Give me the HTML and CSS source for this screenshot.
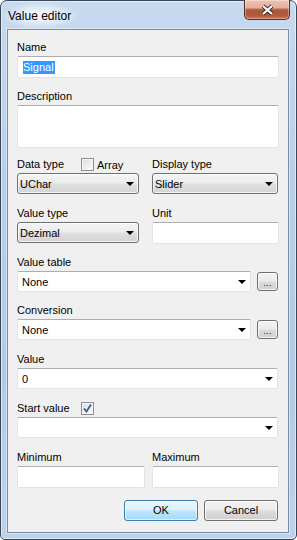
FILE: index.html
```html
<!DOCTYPE html>
<html lang="en">
  <head>
    <meta charset="UTF-8" />
    <meta name="viewport" content="width=device-width, initial-scale=1.0" />
    <title>Value editor</title>
    <link rel="stylesheet" href="styles.css">
  </head>
  <body>
    <div class="window">
      <div class="titlebar">
        <span class="title">Value editor</span>
        <div class="close">
          <svg width="13" height="12" viewBox="0 0 13 12">
            <path d="M2 2 L11 10 M11 2 L2 10" stroke="#3a2620" stroke-width="4" />
            <path d="M2 2 L11 10 M11 2 L2 10" stroke="#ffffff" stroke-width="2.2" />
          </svg>
        </div>
      </div>

      <div class="client">
        <div class="field">
          <div class="label">Name</div>
          <div class="textbox"><span class="selection">Signal</span></div>
        </div>

        <div class="field near">
          <div class="label">Description</div>
          <div class="textbox textarea"></div>
        </div>

        <div class="field grid types">
          <div class="label">
            <span class="label-text">Data type</span>
            <span class="check"></span>
            <span class="check-text">Array</span>
          </div>
          <div class="label">Display type</div>
          <div class="combo flat left">UChar<span class="arrow"></span></div>
          <div class="combo flat">Slider<span class="arrow"></span></div>
        </div>

        <div class="field grid">
          <div class="label">Value type</div>
          <div class="label">Unit</div>
          <div class="combo flat left">Dezimal<span class="arrow"></span></div>
          <div class="textbox"></div>
        </div>

        <div class="field near">
          <div class="label">Value table</div>
          <div class="line">
            <div class="combo">None<span class="arrow"></span></div>
            <div class="small-btn">...</div>
          </div>
        </div>

        <div class="field near">
          <div class="label">Conversion</div>
          <div class="line">
            <div class="combo">None<span class="arrow"></span></div>
            <div class="small-btn">...</div>
          </div>
        </div>

        <div class="field">
          <div class="label">Value</div>
          <div class="combo full">0<span class="arrow"></span></div>
        </div>

        <div class="field">
          <div class="label">
            <span class="label-text">Start value</span>
            <span class="check checked">
              <svg width="11" height="11" viewBox="0 0 11 11">
                <path d="M2 5.5 L4.5 8.5 L9 1.5" fill="none" stroke="#3b5a9b" stroke-width="1.8" />
              </svg>
            </span>
          </div>
          <div class="combo full"><span class="arrow"></span></div>
        </div>

        <div class="field grid">
          <div class="label">Minimum</div>
          <div class="label">Maximum</div>
          <div class="textbox"></div>
          <div class="textbox"></div>
        </div>

        <div class="field actions">
          <div class="button default">OK</div>
          <div class="button">Cancel</div>
        </div>
      </div>
    </div>
  </body>
</html>
```
FILE: styles.css
```css
* {
  box-sizing: border-box;
  margin: 0;
  padding: 0;
}

body {
  width: 297px;
  height: 540px;
  font-family: "Liberation Sans", Arial, sans-serif;
  font-size: 11px;
  color: #000000;
  background: #ffffff;
}

/* window frame */
.window {
  height: 540px;
  display: flex;
  flex-direction: column;
  padding: 0 7px 6px 6px;
  border: 1px solid #3a4656;
  border-radius: 7px 7px 5px 5px;
  background: linear-gradient(to bottom, #c6daf0 0%, #b6cfea 35%, #b0cae7 70%, #bcd3ec 100%);
  box-shadow: inset 0 0 0 1px rgba(255, 255, 255, 0.55);
}

.titlebar {
  height: 28px;
  display: flex;
  align-items: flex-start;
  flex-shrink: 0;
}

.title {
  margin: 1px 0 0 -5px;
  padding: 7px 8px 6px 6px;
  font-size: 12px;
  line-height: 14px;
  background: radial-gradient(ellipse at center, rgba(255, 255, 255, 0.75) 20%, rgba(255, 255, 255, 0) 72%);
}

.close {
  margin: -1px -1px 0 auto;
  width: 46px;
  height: 20px;
  display: flex;
  align-items: center;
  justify-content: center;
  border: 1px solid #4f3028;
  border-top: none;
  border-radius: 0 0 5px 5px;
  background: linear-gradient(to bottom, #efc3b2 0%, #e7ae98 40%, #c9886f 46%, #a85a3e 52%, #b4583a 80%, #cf7258 100%);
  box-shadow: inset 0 0 0 1px rgba(255, 255, 255, 0.35);
}

.close svg {
  margin-top: 1px;
}

/* client area */
.client {
  flex: 1;
  padding: 10px 9px 0;
  background-color: #f0f0f0;
  border: 1px solid #7b8ba0;
  box-shadow: 0 0 0 1px rgba(255, 255, 255, 0.45);
}

.field {
  margin-top: 12px;
}

.field:first-child {
  margin-top: 0;
}

.field.near {
  margin-top: 11px;
}

.field.types {
  margin-top: 9px;
}

.label {
  height: 16px;
  line-height: 14px;
  white-space: nowrap;
  display: flex;
  align-items: flex-start;
}

.label-text {
  width: 64px;
}

.check {
  width: 13px;
  height: 13px;
  margin-top: 1px;
  border: 1px solid #8e8f8f;
  background: linear-gradient(135deg, #dcdcdc 0%, #f0f0f0 60%, #ffffff 100%);
  box-shadow: inset 0 0 0 1px #f4f4f4;
  display: flex;
  align-items: center;
  justify-content: center;
}

.check-text {
  margin-left: 3px;
  margin-top: 1px;
}

.grid {
  display: grid;
  grid-template-columns: 128px 1fr;
  column-gap: 7px;
}

/* text boxes */
.textbox {
  height: 22px;
  display: flex;
  align-items: center;
  padding-left: 5px;
  background: #ffffff;
  border: 1px solid #e2e3ea;
  border-top-color: #abadb3;
  border-radius: 2px;
}

.textarea {
  height: 43px;
}

.selection {
  height: 13px;
  line-height: 13px;
  padding: 0 1px 0 0;
  background: #3399ff;
  color: #ffffff;
}

/* combo boxes */
.combo {
  position: relative;
  height: 21px;
  display: flex;
  align-items: center;
  padding-left: 4px;
  background: #ffffff;
  border: 1px solid #e2e3ea;
  border-top-color: #abadb3;
  border-radius: 2px;
}

.combo.flat {
  padding-left: 2px;
  border: 1px solid #707070;
  border-radius: 3px;
  background: linear-gradient(to bottom, #f4f4f4 0%, #ececec 48%, #dfdfdf 52%, #d4d4d4 100%);
  box-shadow: inset 0 0 0 1px rgba(255, 255, 255, 0.75);
  margin-right: 1px;
}

.combo.left {
  width: 122px;
}

.arrow {
  margin-left: auto;
  margin-right: 4px;
  width: 0;
  height: 0;
  border-left: 4px solid transparent;
  border-right: 4px solid transparent;
  border-top: 4px solid #000000;
}

.line {
  display: flex;
  gap: 6px;
  align-items: center;
}

.line .combo {
  flex: 1;
}

.small-btn {
  width: 21px;
  height: 19px;
  margin-right: 1px;
  text-align: center;
  line-height: 19px;
  font-size: 10px;
  color: #3a2a2a;
  border: 1px solid #707070;
  border-radius: 3px;
  background: linear-gradient(to bottom, #f2f2f2 0%, #ebebeb 48%, #dddddd 52%, #cfcfcf 100%);
  box-shadow: inset 0 0 0 1px rgba(255, 255, 255, 0.75);
}

.combo.full {
  margin-right: 1px;
}

/* dialog buttons */
.actions {
  display: flex;
  justify-content: flex-end;
  gap: 6px;
  padding-right: 1px;
}

.button {
  width: 74px;
  height: 21px;
  line-height: 19px;
  text-align: center;
  border: 1px solid #707070;
  border-radius: 3px;
  background: linear-gradient(to bottom, #f2f2f2 0%, #ebebeb 48%, #dddddd 52%, #cfcfcf 100%);
  box-shadow: inset 0 0 0 1px rgba(255, 255, 255, 0.75);
}

.button.default {
  border-color: #3c7fb1;
  background: linear-gradient(to bottom, #eaf6fd 0%, #d9f0fc 48%, #bee6fd 52%, #a7d9f5 100%);
  box-shadow: inset 0 0 0 1px rgba(255, 255, 255, 0.6);
}
```
